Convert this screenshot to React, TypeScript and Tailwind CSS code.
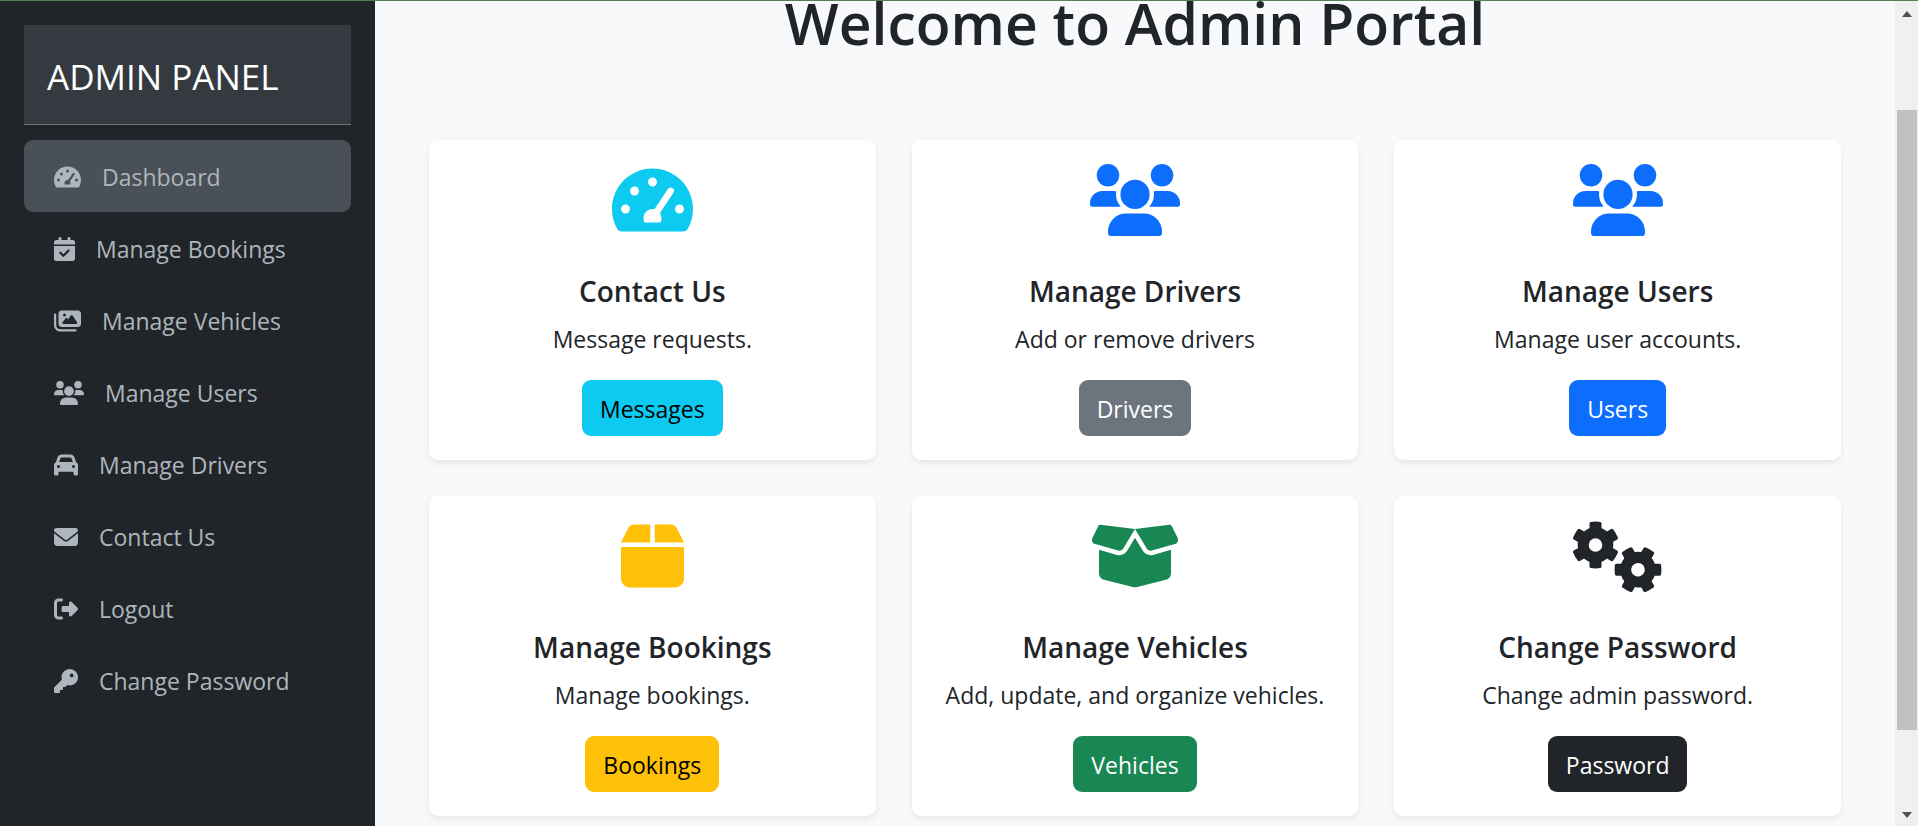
import type { ComponentType, SVGProps } from "react";
import {
  FaBox,
  FaBoxOpen,
  FaCalendarCheck,
  FaCar,
  FaEnvelope,
  FaImages,
  FaKey,
  FaRightFromBracket,
} from "react-icons/fa6";

type Icon = ComponentType<SVGProps<SVGSVGElement>>;

function GaugeIcon(props: SVGProps<SVGSVGElement>) {
  return (
    <svg viewBox="0 0 576 512" fill="currentColor" {...props}>
      <path
        fillRule="evenodd"
        d="M288 32C128.94 32 0 160.94 0 320c0 52.8 14.25 102.26 39.06 144.8 5.61 9.62 16.3 15.2 27.44 15.2h443c11.14 0 21.83-5.58 27.44-15.2C561.75 422.26 576 372.8 576 320c0-159.06-128.94-288-288-288z
          M288 96a32 32 0 1 1 0 64a32 32 0 1 1 0-64z
          M160 160a32 32 0 1 1 0 64a32 32 0 1 1 0-64z
          M96 288a32 32 0 1 1 0 64a32 32 0 1 1 0-64z
          M480 288a32 32 0 1 1 0 64a32 32 0 1 1 0-64z
          M230 416C226 406 224 396 224 384A64 64 0 0 1 302 321.5L396 179A24 24 0 0 1 437 204L341 348Q352 364 352 384C352 396 350 406 346 416z"
      />
    </svg>
  );
}

function UsersIcon(props: SVGProps<SVGSVGElement>) {
  return (
    <svg viewBox="0 0 640 512" fill="currentColor" {...props}>
      <circle cx="128" cy="80" r="80" />
      <circle cx="512" cy="80" r="80" />
      <circle cx="320" cy="216" r="104" />
      <path d="M88 192H174Q184 193 186 198Q179 261 219 304H16A16 16 0 0 1 0 288V280A88 88 0 0 1 88 192z" />
      <path d="M552 192H466Q456 193 454 198Q461 261 421 304H624A16 16 0 0 0 640 288V280A88 88 0 0 0 552 192z" />
      <path d="M256 352H384A128 128 0 0 1 512 480V488A24 24 0 0 1 488 512H152A24 24 0 0 1 128 488V480A128 128 0 0 1 256 352z" />
    </svg>
  );
}

const toothAngles = [0, 60, 120, 180, 240, 300];

function Gear({ x, y, turn }: { x: number; y: number; turn: number }) {
  return (
    <g transform={`translate(${x} ${y}) rotate(${turn})`}>
      <circle r="12.3" fill="none" stroke="currentColor" strokeWidth="11" />
      {toothAngles.map((angle) => (
        <path key={angle} transform={`rotate(${angle})`} d="M-6 -14V-21.6Q-5.9 -22.8 -4.8 -23.1Q0 -23.8 4.8 -23.1Q5.9 -22.8 6 -21.6V-14z" />
      ))}
    </g>
  );
}

function GearsIcon(props: SVGProps<SVGSVGElement>) {
  return (
    <svg viewBox="0 0 90 72" fill="currentColor" {...props}>
      <Gear x={22.5} y={25} turn={0} />
      <Gear x={65} y={49.7} turn={30} />
    </svg>
  );
}

type NavItem = { label: string; icon: Icon; width: string; active?: boolean };

const navItems: NavItem[] = [
  { label: "Dashboard", icon: GaugeIcon, width: "w-[27px]", active: true },
  { label: "Manage Bookings", icon: FaCalendarCheck, width: "w-[21px]" },
  { label: "Manage Vehicles", icon: FaImages, width: "w-[27px]" },
  { label: "Manage Users", icon: UsersIcon, width: "w-[30px]" },
  { label: "Manage Drivers", icon: FaCar, width: "w-6" },
  { label: "Contact Us", icon: FaEnvelope, width: "w-6" },
  { label: "Logout", icon: FaRightFromBracket, width: "w-6" },
  { label: "Change Password", icon: FaKey, width: "w-6" },
];

type CardItem = {
  title: string;
  text: string;
  action: string;
  icon: Icon;
  iconClass: string;
  buttonClass: string;
};

const cards: CardItem[] = [
  { title: "Contact Us", text: "Message requests.", action: "Messages", icon: GaugeIcon, iconClass: "w-[81px] text-[#0dcaf0]", buttonClass: "bg-[#0dcaf0] text-black" },
  { title: "Manage Drivers", text: "Add or remove drivers", action: "Drivers", icon: UsersIcon, iconClass: "w-[90px] text-[#0d6efd]", buttonClass: "bg-[#6c757d] text-white" },
  { title: "Manage Users", text: "Manage user accounts.", action: "Users", icon: UsersIcon, iconClass: "w-[90px] text-[#0d6efd]", buttonClass: "bg-[#0d6efd] text-white" },
  { title: "Manage Bookings", text: "Manage bookings.", action: "Bookings", icon: FaBox, iconClass: "w-[63px] text-[#ffc107]", buttonClass: "bg-[#ffc107] text-black" },
  { title: "Manage Vehicles", text: "Add, update, and organize vehicles.", action: "Vehicles", icon: FaBoxOpen, iconClass: "w-[90px] text-[#198754]", buttonClass: "bg-[#198754] text-white" },
  { title: "Change Password", text: "Change admin password.", action: "Password", icon: GearsIcon, iconClass: "w-[90px] text-[#212529]", buttonClass: "bg-[#212529] text-white" },
];

function Sidebar() {
  return (
    <aside className="w-[375px] shrink-0 bg-[#212529] p-6">
      <div className="mb-[15px] border-b border-[#6c757d] bg-[#343a40] px-[23px] pt-[25px] pb-5">
        <h2 className="text-[35px] leading-[54px] text-white">ADMIN PANEL</h2>
      </div>
      <nav aria-label="Admin">
        <ul>
          {navItems.map(({ label, icon: Icon, width, active }) => (
            <li key={label}>
              <a
                href="#"
                aria-current={active ? "page" : undefined}
                className={`flex h-[72px] items-center gap-[21px] rounded-[9px] px-[30px] pt-[2px] text-[#adb5bd] ${active ? "bg-[#495057]" : ""}`}
              >
                <Icon aria-hidden className={`h-6 shrink-0 ${width}`} />
                {label}
              </a>
            </li>
          ))}
        </ul>
      </nav>
    </aside>
  );
}

function DashboardCard({ title, text, action, icon: Icon, iconClass, buttonClass }: CardItem) {
  return (
    <article className="flex flex-col items-center rounded-[9px] bg-white p-6 text-center shadow-[0_3px_6px_rgba(0,0,0,0.075)]">
      <Icon aria-hidden className={`mb-9 h-[72px] ${iconClass}`} />
      <h2 className="mb-[10px] text-[28px] leading-[38px] font-semibold">{title}</h2>
      <p className="mb-[22px] leading-[38px]">{text}</p>
      <button type="button" className={`h-14 rounded-[9px] px-[18px] pt-[2px] leading-9 ${buttonClass}`}>
        {action}
      </button>
    </article>
  );
}

function ScrollRail() {
  return (
    <div aria-hidden className="flex w-[23px] shrink-0 flex-col items-center bg-[#f0f0f0]">
      <div className="flex h-[25px] items-center">
        <svg viewBox="0 0 10 6" className="h-[6px] w-[10px] fill-[#505050]">
          <path d="M5 0 10 6H0z" />
        </svg>
      </div>
      <div className="flex w-full flex-1 flex-col pr-px pl-[2px]">
        <div className="flex-[84]" />
        <div className="flex-[620] bg-[#c1c1c1]" />
        <div className="flex-[73]" />
      </div>
      <div className="flex h-[23px] items-center">
        <svg viewBox="0 0 10 6" className="h-[6px] w-[10px] fill-[#505050]">
          <path d="M0 0H10L5 6z" />
        </svg>
      </div>
    </div>
  );
}

export default function App() {
  return (
    <div className="flex h-screen flex-col overflow-hidden border-t border-[#4f8255] bg-[#f8f9fa] font-['Open_Sans','Noto_Sans',sans-serif] text-[23px] text-[#212529]">
      <div className="flex min-h-0 flex-1">
        <Sidebar />
        <main className="min-w-0 flex-1 overflow-hidden px-[54px]">
          <h1 className="-mt-[14px] mb-[81px] text-center text-[57px] leading-[72px] font-semibold">
            Welcome to Admin Portal
          </h1>
          <div className="grid grid-cols-3 gap-9">
            {cards.map((card) => (
              <DashboardCard key={card.title} {...card} />
            ))}
          </div>
        </main>
        <ScrollRail />
      </div>
    </div>
  );
}
